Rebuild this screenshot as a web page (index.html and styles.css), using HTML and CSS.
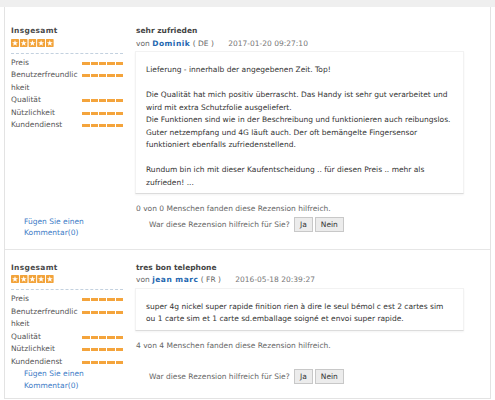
FILE: index.html
```html
<!DOCTYPE html>
<html lang="de">
<head>
    <meta charset="UTF-8">
    <meta name="viewport" content="width=device-width, initial-scale=1.0">
    <title>Rezensionen</title>
    <link rel="stylesheet" href="styles.css">
</head>
<body>
    <!-- Sprite für die Sterne -->
    <svg class="sprite" width="0" height="0">
        <symbol id="star" viewBox="0 0 8 8">
            <rect width="8" height="8" rx="0.8" fill="#f2a33a"/>
            <polygon fill="#fff" points="4,1 4.76,3.15 7.04,3.21 5.24,4.6 5.88,6.79 4,5.5 2.12,6.79 2.76,4.6 0.96,3.21 3.24,3.15"/>
        </symbol>
    </svg>

    <div class="tab-bottom"></div>

    <div class="reviews">
        <div class="review first">
            <div class="rating">
                <div class="rating-title">Insgesamt</div>
                <svg class="stars" width="43" height="8" viewBox="0 0 43 8">
                    <use href="#star" x="0" width="8" height="8"/>
                    <use href="#star" x="8.7" width="8" height="8"/>
                    <use href="#star" x="17.4" width="8" height="8"/>
                    <use href="#star" x="26.1" width="8" height="8"/>
                    <use href="#star" x="34.8" width="8" height="8"/>
                </svg>
                <div class="rating-list">
                    <span class="label">Preis</span><span class="dashes"><i></i><i></i><i></i><i></i><i></i></span>
                    <span class="label">Benutzerfreundlichkeit</span><span class="dashes"><i></i><i></i><i></i><i></i><i></i></span>
                    <span class="label">Qualität</span><span class="dashes"><i></i><i></i><i></i><i></i><i></i></span>
                    <span class="label">Nützlichkeit</span><span class="dashes"><i></i><i></i><i></i><i></i><i></i></span>
                    <span class="label">Kundendienst</span><span class="dashes"><i></i><i></i><i></i><i></i><i></i></span>
                </div>
            </div>

            <div class="content">
                <div class="review-title">sehr zufrieden</div>
                <div class="meta">von <a href="#" class="author">Dominik</a> ( DE ) <span class="date">2017-01-20 09:27:10</span></div>
                <div class="review-text">
                    Lieferung - innerhalb der angegebenen Zeit. Top!<br><br>
                    Die Qualität hat mich positiv überrascht. Das Handy ist sehr gut verarbeitet und wird mit extra Schutzfolie ausgeliefert.<br>
                    Die Funktionen sind wie in der Beschreibung und funktionieren auch reibungslos.<br>
                    Guter netzempfang und 4G läuft auch. Der oft bemängelte Fingersensor funktioniert ebenfalls zufriedenstellend.<br><br>
                    Rundum bin ich mit dieser Kaufentscheidung .. für diesen Preis .. mehr als zufrieden! ...
                </div>
                <div class="helpful">0 von 0 Menschen fanden diese Rezension hilfreich.</div>
            </div>

            <a href="#" class="comment-link">Fügen Sie einen Kommentar(0)</a>
            <div class="vote">War diese Rezension hilfreich für Sie? <button>Ja</button><button>Nein</button></div>
        </div>

        <div class="review">
            <div class="rating">
                <div class="rating-title">Insgesamt</div>
                <svg class="stars" width="43" height="8" viewBox="0 0 43 8">
                    <use href="#star" x="0" width="8" height="8"/>
                    <use href="#star" x="8.7" width="8" height="8"/>
                    <use href="#star" x="17.4" width="8" height="8"/>
                    <use href="#star" x="26.1" width="8" height="8"/>
                    <use href="#star" x="34.8" width="8" height="8"/>
                </svg>
                <div class="rating-list">
                    <span class="label">Preis</span><span class="dashes"><i></i><i></i><i></i><i></i><i></i></span>
                    <span class="label">Benutzerfreundlichkeit</span><span class="dashes"><i></i><i></i><i></i><i></i><i></i></span>
                    <span class="label">Qualität</span><span class="dashes"><i></i><i></i><i></i><i></i><i></i></span>
                    <span class="label">Nützlichkeit</span><span class="dashes"><i></i><i></i><i></i><i></i><i></i></span>
                    <span class="label">Kundendienst</span><span class="dashes"><i></i><i></i><i></i><i></i><i></i></span>
                </div>
            </div>

            <div class="content">
                <div class="review-title">tres bon telephone</div>
                <div class="meta">von <a href="#" class="author">jean marc</a> ( FR ) <span class="date">2016-05-18 20:39:27</span></div>
                <div class="review-text">
                    super 4g nickel super rapide finition rien à dire le seul bémol c est 2 cartes sim ou 1 carte sim et 1 carte sd.emballage soigné et envoi super rapide.
                </div>
                <div class="helpful">4 von 4 Menschen fanden diese Rezension hilfreich.</div>
            </div>

            <a href="#" class="comment-link">Fügen Sie einen Kommentar(0)</a>
            <div class="vote">War diese Rezension hilfreich für Sie? <button>Ja</button><button>Nein</button></div>
        </div>
    </div>
</body>
</html>
```

FILE: styles.css
```css
html, body {
    margin: 0;
    padding: 0;
    background: #fff;
}

body {
    font-family: "DejaVu Sans", Verdana, sans-serif;
    font-size: 7.5px;
    line-height: 12.5px;
    color: #555;
}

.sprite {
    position: absolute;
}

/* Rest der Tab-Leiste oben */
.tab-bottom {
    height: 7px;
    background: #efefef;
}

.reviews {
    margin: 0 4px;
    border-left: 1px solid #e3e3e3;
    border-right: 1px solid #e3e3e3;
    border-bottom: 1px solid #e3e3e3;
}

.review {
    display: grid;
    grid-template-columns: 112px 1fr;
    column-gap: 13px;
    align-items: center;
    padding: 12px 27px 7px 6px;
    border-top: 1px solid #e6e6e6;
}

.review.first {
    padding: 18px 27px 10px 6px;
    border-top: none;
}

.rating, .content {
    align-self: start;
}

.rating-title {
    font-weight: bold;
    letter-spacing: 0.3px;
    color: #4a4a4a;
}

.stars {
    display: block;
    margin: 1px 0 6px;
}

.rating-list {
    display: grid;
    grid-template-columns: 67px 1fr;
    border-top: 1px dashed #c3d1df;
    padding-top: 3px;
}

.label {
    word-break: break-all;
    color: #555;
}

.dashes {
    display: flex;
    justify-content: flex-end;
    gap: 1.2px;
    padding-top: 5px;
}

.dashes i {
    width: 7.2px;
    height: 3px;
    background: #f4a43c;
}

.review-title {
    font-weight: bold;
    color: #444;
}

.meta {
    color: #666;
}

.author {
    font-weight: bold;
    letter-spacing: 0.5px;
    color: #2266b0;
    text-decoration: none;
}

.date {
    margin-left: 12px;
    color: #777;
}

.review-text {
    margin: 1px -1px 0;
    padding: 12px 10px 4px;
    color: #333;
    border: 1px solid #f2f2f2;
    border-bottom-color: #dcdcdc;
    box-shadow: 0 1px 2px rgba(0, 0, 0, 0.05);
}

.helpful {
    margin-top: 9px;
    color: #666;
}

.comment-link {
    display: block;
    width: 80px;
    margin-left: 13px;
    line-height: 11.5px;
    color: #3c7bc6;
    text-decoration: none;
}

.vote {
    align-self: start;
    margin-top: 1px;
    padding-left: 13px;
    color: #666;
}

.vote button {
    font-family: inherit;
    font-size: 7.5px;
    line-height: 11px;
    padding: 1px 5px;
    margin-left: 2px;
    color: #333;
    background: #ececec;
    border: 1px solid #c8c8c8;
    border-radius: 0;
}
```
